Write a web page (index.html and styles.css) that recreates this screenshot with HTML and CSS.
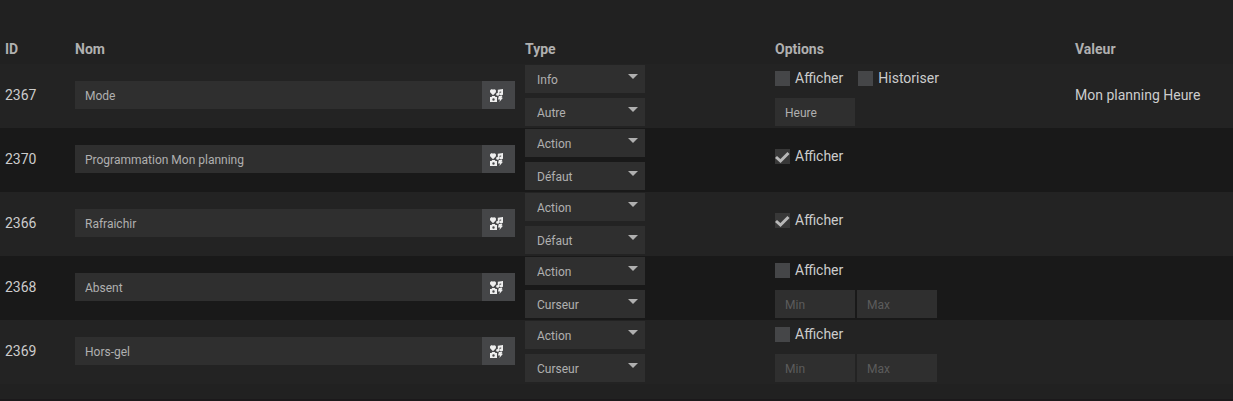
FILE: index.html
```html
<!DOCTYPE html>
<html lang="fr">
  <head>
    <meta charset="UTF-8" />
    <meta name="viewport" content="width=device-width, initial-scale=1.0" />
    <title>Commandes</title>
    <link rel="stylesheet" href="styles.css">
  </head>
  <body>
    <svg class="sprite" aria-hidden="true">
      <symbol id="icons" viewBox="0 0 13 13">
        <path d="M3 6.2 L0.3 3.4 C-0.6 1.6 0.5 0.2 1.8 0.2 C2.5 0.2 3 0.8 3 0.8 C3 0.8 3.5 0.2 4.2 0.2 C5.6 0.2 6.6 1.7 5.7 3.4 Z" />
        <path d="M7.8 0.8 L13 0 V4.7 A1.7 1.4 0 1 1 11.2 3.6 V2.4 L9.5 2.7 V5.2 A1.7 1.4 0 1 1 7.8 4 Z" />
        <path fill-rule="evenodd" d="M0 8 H1.5 L2.2 7 H4.8 L5.5 8 H7 V13 H0 Z M3.5 9.3 A1.2 1.2 0 1 0 3.5 11.7 A1.2 1.2 0 1 0 3.5 9.3 Z" />
        <path d="M8.8 6.9 H12.4 L11.6 8.8 H13 L9.4 13 L10 10.4 H8 Z" />
      </symbol>
    </svg>

    <table class="cmd-table">
      <colgroup>
        <col class="col-id" />
        <col class="col-name" />
        <col class="col-type" />
        <col class="col-options" />
        <col />
      </colgroup>
      <thead>
        <tr>
          <th>ID</th>
          <th>Nom</th>
          <th>Type</th>
          <th>Options</th>
          <th>Valeur</th>
        </tr>
      </thead>
      <tbody>
        <tr>
          <td>2367</td>
          <td>
            <div class="name-group">
              <input type="text" value="Mode" aria-label="Nom" />
              <button type="button" aria-label="Choisir une icône"><svg><use href="#icons" /></svg></button>
            </div>
          </td>
          <td>
            <div class="types">
              <select aria-label="Type"><option>Info</option><option>Action</option></select>
              <select aria-label="Sous-type"><option>Autre</option></select>
            </div>
          </td>
          <td>
            <div class="checks">
              <label><input type="checkbox" />Afficher</label>
              <label><input type="checkbox" />Historiser</label>
            </div>
            <div class="limits">
              <input type="text" value="Heure" aria-label="Unité" />
            </div>
          </td>
          <td>Mon planning Heure</td>
        </tr>
        <tr>
          <td>2370</td>
          <td>
            <div class="name-group">
              <input type="text" value="Programmation Mon planning" aria-label="Nom" />
              <button type="button" aria-label="Choisir une icône"><svg><use href="#icons" /></svg></button>
            </div>
          </td>
          <td>
            <div class="types">
              <select aria-label="Type"><option>Action</option><option>Info</option></select>
              <select aria-label="Sous-type"><option>Défaut</option></select>
            </div>
          </td>
          <td>
            <div class="checks">
              <label><input type="checkbox" checked />Afficher</label>
            </div>
          </td>
          <td></td>
        </tr>
        <tr>
          <td>2366</td>
          <td>
            <div class="name-group">
              <input type="text" value="Rafraichir" aria-label="Nom" />
              <button type="button" aria-label="Choisir une icône"><svg><use href="#icons" /></svg></button>
            </div>
          </td>
          <td>
            <div class="types">
              <select aria-label="Type"><option>Action</option><option>Info</option></select>
              <select aria-label="Sous-type"><option>Défaut</option></select>
            </div>
          </td>
          <td>
            <div class="checks">
              <label><input type="checkbox" checked />Afficher</label>
            </div>
          </td>
          <td></td>
        </tr>
        <tr>
          <td>2368</td>
          <td>
            <div class="name-group">
              <input type="text" value="Absent" aria-label="Nom" />
              <button type="button" aria-label="Choisir une icône"><svg><use href="#icons" /></svg></button>
            </div>
          </td>
          <td>
            <div class="types">
              <select aria-label="Type"><option>Action</option><option>Info</option></select>
              <select aria-label="Sous-type"><option>Curseur</option></select>
            </div>
          </td>
          <td>
            <div class="checks">
              <label><input type="checkbox" />Afficher</label>
            </div>
            <div class="limits">
              <input type="text" placeholder="Min" aria-label="Min" />
              <input type="text" placeholder="Max" aria-label="Max" />
            </div>
          </td>
          <td></td>
        </tr>
        <tr>
          <td>2369</td>
          <td>
            <div class="name-group">
              <input type="text" value="Hors-gel" aria-label="Nom" />
              <button type="button" aria-label="Choisir une icône"><svg><use href="#icons" /></svg></button>
            </div>
          </td>
          <td>
            <div class="types">
              <select aria-label="Type"><option>Action</option><option>Info</option></select>
              <select aria-label="Sous-type"><option>Curseur</option></select>
            </div>
          </td>
          <td>
            <div class="checks">
              <label><input type="checkbox" />Afficher</label>
            </div>
            <div class="limits">
              <input type="text" placeholder="Min" aria-label="Min" />
              <input type="text" placeholder="Max" aria-label="Max" />
            </div>
          </td>
          <td></td>
        </tr>
      </tbody>
    </table>
  </body>
</html>
```
FILE: styles.css
```css
* {
  box-sizing: border-box;
}

body {
  margin: 0;
  padding: 34px 0 15px;
  border-bottom: 2px solid #1b191b;
  background: #212121;
  color: #ccc;
  font-family: Roboto, sans-serif;
  font-size: 14px;
  line-height: 20px;
}

.sprite {
  display: none;
}

.cmd-table {
  width: 100%;
  table-layout: fixed;
  border-collapse: collapse;
}

.col-id {
  width: 70px;
}

.col-name {
  width: 450px;
}

.col-type {
  width: 250px;
}

.col-options {
  width: 300px;
}

th {
  padding: 5px;
  text-align: left;
  font-weight: 700;
  color: #b0b0b0;
}

td {
  padding: 0 5px 2px;
  vertical-align: middle;
}

tbody tr:nth-child(odd) {
  background: #232323;
}

tbody tr:nth-child(even) {
  background: #191919;
}

input[type="text"],
select {
  height: 28px;
  border: none;
  border-radius: 0;
  outline: none;
  background-color: #2f2f2f;
  color: #b0b0b0;
  font-family: inherit;
  font-size: 12px;
  padding: 1px 10px 0;
}

input::placeholder {
  color: #5c5c5c;
}

.name-group {
  display: flex;
}

.name-group input {
  flex: 1;
  min-width: 0;
}

.name-group button {
  display: flex;
  align-items: center;
  justify-content: center;
  width: 33px;
  height: 28px;
  padding: 0 5px 0 0;
  border: none;
  background: #454648;
  cursor: pointer;
}

.name-group svg {
  width: 13px;
  height: 13px;
  fill: #eee;
}

.types {
  display: flex;
  flex-direction: column;
  gap: 5px;
  padding-top: 1px;
}

select {
  appearance: none;
  width: 120px;
  padding: 1px 12px 0;
  background-image: url("data:image/svg+xml,%3Csvg xmlns='http://www.w3.org/2000/svg' width='10' height='5'%3E%3Cpath d='M0 0h10L5 5z' fill='%23b0b0b0'/%3E%3C/svg%3E");
  background-repeat: no-repeat;
  background-position: right 7px top 9px;
}

.checks {
  display: flex;
  gap: 15px;
  padding-top: 1px;
  margin-bottom: 7px;
}

.checks label {
  display: flex;
  align-items: center;
  gap: 5px;
  height: 26px;
}

input[type="checkbox"] {
  appearance: none;
  width: 15px;
  height: 15px;
  margin: 0;
  background: #454648;
}

input[type="checkbox"]:checked {
  background: #383838 url("data:image/svg+xml,%3Csvg xmlns='http://www.w3.org/2000/svg' width='15' height='15'%3E%3Cpath d='M1 8l4.500 4L13.500 4' fill='none' stroke='%23b8b8b8' stroke-width='3'/%3E%3C/svg%3E") no-repeat;
}

.limits {
  display: flex;
  gap: 2px;
}

.limits input {
  width: 80px;
}
```
